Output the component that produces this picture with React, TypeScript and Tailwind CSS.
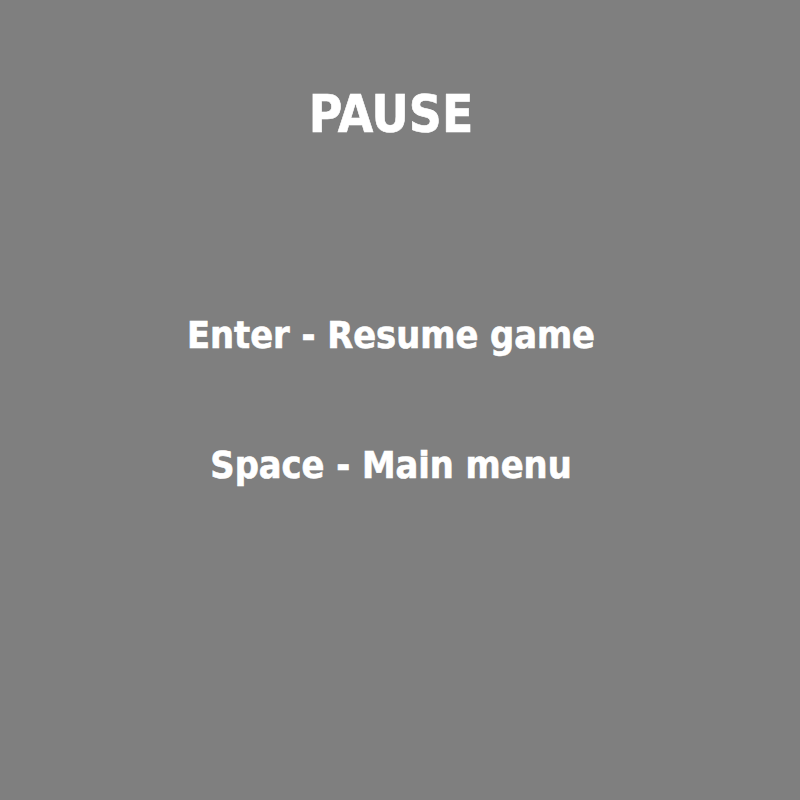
export default function App() {
  return (
    <div
      className="w-[800px] h-[800px] bg-[#7f7f7f] text-white font-bold flex flex-col items-center pr-[18px] [-webkit-text-stroke:0.6px_white]"
      style={{ fontFamily: '"DejaVu Sans Condensed", "DejaVu Sans", sans-serif' }}
    >
      <div className="mt-[85px] text-[51px] leading-[60px]">PAUSE</div>
      <div className="mt-[168px] text-[37.5px] leading-[44px]">Enter - Resume game</div>
      <div className="mt-[86px] text-[37.5px] leading-[44px]">Space - Main menu</div>
    </div>
  );
}
